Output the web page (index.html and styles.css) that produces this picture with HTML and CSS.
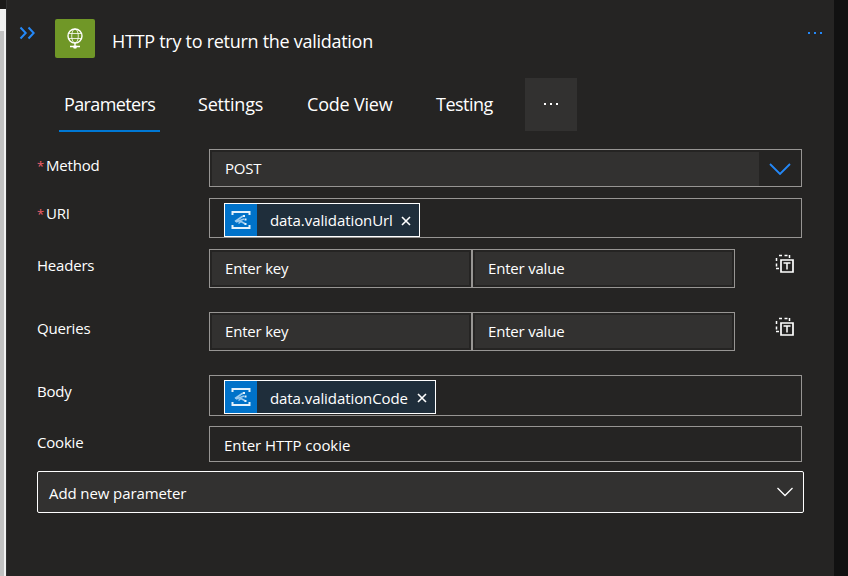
FILE: index.html
```html
<!DOCTYPE html>
<html lang="en">
<head>
    <meta charset="UTF-8">
    <meta name="viewport" content="width=device-width, initial-scale=1.0">
    <title>HTTP try to return the validation</title>
    <link rel="stylesheet" href="styles.css">
</head>
<body>

    <!-- Scrollbar of the designer canvas -->
    <div class="canvas-edge">
        <div class="scroll-button"></div>
        <div class="scroll-thumb"></div>
    </div>

    <div class="panel">
        <!-- Header -->
        <div class="header">
            <svg class="collapse" width="16" height="14" viewBox="0 0 16 14">
                <path d="M1.5 1.5 L6.7 7 L1.5 12.5 M9.5 1.5 L14.7 7 L9.5 12.5"/>
            </svg>
            <div class="logo">
                <svg width="20" height="24" viewBox="0 0 20 24">
                    <circle cx="10" cy="9" r="7" stroke-width="1.4"/>
                    <ellipse cx="10" cy="9" rx="3.3" ry="7" stroke-width="0.8"/>
                    <path d="M3.5 6.5 H16.5 M3.5 11.5 H16.5" stroke-width="0.8"/>
                    <path d="M10 16 V21.5 M5 19.5 H15" stroke-width="1.4"/>
                    <path d="M8.3 20 H11.7" stroke-width="2.6"/>
                </svg>
            </div>
            <div class="title">HTTP try to return the validation</div>
            <svg class="menu" width="17" height="4" viewBox="0 0 17 4">
                <path d="M1 1h2v2h-2z M7 1h2v2h-2z M13 1h2v2h-2z"/>
            </svg>
        </div>

        <!-- Tabs -->
        <div class="tabs">
            <div class="tab tab-parameters active"><span>Parameters</span></div>
            <div class="tab tab-settings"><span>Settings</span></div>
            <div class="tab tab-code"><span>Code View</span></div>
            <div class="tab tab-testing"><span>Testing</span></div>
            <div class="tab-more">
                <svg width="17" height="4" viewBox="0 0 17 4">
                    <path d="M1 1h2v2h-2z M7 1h2v2h-2z M13 1h2v2h-2z"/>
                </svg>
            </div>
        </div>

        <!-- Parameters -->
        <div class="form">
            <div class="row row-method">
                <div class="label"><span class="required">*</span>Method</div>
                <div class="field select">
                    <div class="select-value">POST</div>
                    <svg width="22" height="12" viewBox="0 0 22 12">
                        <path d="M1 1 L11 11 L21 1"/>
                    </svg>
                </div>
            </div>

            <div class="row row-uri">
                <div class="label"><span class="required">*</span>URI</div>
                <div class="field token-field">
                    <div class="token token-url">
                        <div class="token-icon">
                            <svg width="20" height="20" viewBox="0 0 20 20">
                                <path d="M1.5 5 V2 H18.5 V5 M1.5 15 V18 H18.5 V15" stroke="#e4f1fb" stroke-width="2"/>
                                <path d="M4 11.5 L12 6 M5 12 L13 9 M7.5 13.5 L10 11.5 L14.5 14" stroke="#9ccbef" stroke-width="1.6"/>
                                <path d="M12 6 h2 M13.5 9.5 h2 M13.5 14 h2" stroke="#e4f1fb" stroke-width="1.8"/>
                            </svg>
                        </div>
                        <span class="token-text">data.validationUrl</span>
                        <svg class="token-close" width="10" height="10" viewBox="0 0 10 10">
                            <path d="M1 1 L9 9 M9 1 L1 9"/>
                        </svg>
                    </div>
                </div>
            </div>

            <div class="row row-pairs">
                <div class="label">Headers</div>
                <div class="pair">
                    <div class="field"><div class="pair-value">Enter key</div></div>
                    <div class="field"><div class="pair-value">Enter value</div></div>
                </div>
                <svg class="text-mode" width="20" height="20" viewBox="0 0 20 20">
                    <path d="M1.5 4 V7 M1.5 9.5 V12.5 M1 14.5 H4 M4 1.5 H7 M9.5 1.5 H12.5 M14.5 1 V4" stroke-width="1.5"/>
                    <path d="M6 6 H18 V18 H6 Z" stroke-width="1.7"/>
                    <path d="M8.5 9 H15.5 M12 9 V15.5" stroke-width="1.5"/>
                </svg>
            </div>

            <div class="row row-pairs">
                <div class="label">Queries</div>
                <div class="pair">
                    <div class="field"><div class="pair-value">Enter key</div></div>
                    <div class="field"><div class="pair-value">Enter value</div></div>
                </div>
                <svg class="text-mode" width="20" height="20" viewBox="0 0 20 20">
                    <path d="M1.5 4 V7 M1.5 9.5 V12.5 M1 14.5 H4 M4 1.5 H7 M9.5 1.5 H12.5 M14.5 1 V4" stroke-width="1.5"/>
                    <path d="M6 6 H18 V18 H6 Z" stroke-width="1.7"/>
                    <path d="M8.5 9 H15.5 M12 9 V15.5" stroke-width="1.5"/>
                </svg>
            </div>

            <div class="row row-body">
                <div class="label">Body</div>
                <div class="field token-field">
                    <div class="token token-code">
                        <div class="token-icon">
                            <svg width="20" height="20" viewBox="0 0 20 20">
                                <path d="M1.5 5 V2 H18.5 V5 M1.5 15 V18 H18.5 V15" stroke="#e4f1fb" stroke-width="2"/>
                                <path d="M4 11.5 L12 6 M5 12 L13 9 M7.5 13.5 L10 11.5 L14.5 14" stroke="#9ccbef" stroke-width="1.6"/>
                                <path d="M12 6 h2 M13.5 9.5 h2 M13.5 14 h2" stroke="#e4f1fb" stroke-width="1.8"/>
                            </svg>
                        </div>
                        <span class="token-text">data.validationCode</span>
                        <svg class="token-close" width="10" height="10" viewBox="0 0 10 10">
                            <path d="M1 1 L9 9 M9 1 L1 9"/>
                        </svg>
                    </div>
                </div>
            </div>

            <div class="row row-cookie">
                <div class="label">Cookie</div>
                <div class="field cookie-value">Enter HTTP cookie</div>
            </div>

            <div class="add-parameter">
                <span>Add new parameter</span>
                <svg width="18" height="10" viewBox="0 0 18 10">
                    <path d="M1.5 1 L9 8.5 L16.5 1"/>
                </svg>
            </div>
        </div>
    </div>

</body>
</html>
```
FILE: styles.css
```css
/* General styles */
* {
    box-sizing: border-box;
}

body {
    margin: 0;
    height: 576px;
    display: flex;
    overflow: hidden;
    background-color: #111111;
    color: #ffffff;
    font-family: "Open Sans", "Noto Sans", sans-serif;
    font-size: 15px;
    letter-spacing: -0.2px;
    white-space: nowrap;
}

svg {
    display: block;
    flex: none;
    fill: none;
}

/* Canvas scrollbar */
.canvas-edge {
    width: 6px;
    padding-top: 9px;
    display: flex;
    flex-direction: column;
    background-color: #1b1a19;
}

.scroll-button {
    height: 22px;
    background-color: #f1f1f1;
}

.scroll-thumb {
    flex: 1;
    background-color: #c1c1c1;
    border-right: 2px solid #f1f1f1;
}

.panel {
    width: 828px;
    background-color: #252423;
    border-left: 1px solid #303030;
}

/* Header */
.header {
    height: 78px;
    padding: 19px 10px 0 12px;
    display: flex;
    align-items: flex-start;
}

.collapse {
    margin-top: 7px;
    stroke: #2488f8;
    stroke-width: 2;
}

.logo {
    width: 40px;
    height: 39px;
    margin-left: 20px;
    padding: 8px 10px;
    background-color: #709727;
    border-radius: 2px;
}

.logo svg {
    stroke: #ffffff;
}

.title {
    flex: 1;
    margin-left: 17px;
    font-size: 18px;
    line-height: 24px;
    padding-top: 10px;
    letter-spacing: -0.28px;
}

.menu {
    margin-top: 12px;
    fill: #2488f8;
}

/* Tabs */
.tabs {
    height: 53px;
    padding-left: 52px;
    display: flex;
    font-size: 18px;
    line-height: 24px;
}

.tab {
    height: 54px;
    padding: 14px 0 0 5px;
}

.tab-parameters {
    width: 101px;
    margin-right: 33px;
    letter-spacing: -0.62px;
}

.tab-settings {
    width: 109px;
}

.tab-code {
    width: 129px;
}

.tab-testing {
    width: 94px;
    letter-spacing: -0.5px;
}

.active {
    border-bottom: 2px solid #0078d4;
}

.tab-more {
    width: 52px;
    padding: 24px 0 0 18px;
    background-color: #323130;
}

.tab-more svg {
    fill: #ffffff;
}

/* Form */
.form {
    padding: 18px 30px 0 30px;
}

.row {
    display: flex;
    align-items: flex-start;
    line-height: 20px;
}

.label {
    width: 172px;
    padding-top: 6px;
}

.required {
    display: inline-block;
    width: 9px;
    color: #f1606b;
    font-size: 13px;
}

.row-uri .label {
    padding-top: 5px;
}

.field {
    border: 1px solid #979593;
}

.row > .field {
    width: 593px;
}

.row-method {
    height: 49px;
}

.select {
    height: 38px;
    display: flex;
    align-items: center;
    justify-content: space-between;
    padding: 2px 10px 0 2px;
}

.select-value {
    width: 547px;
    height: 34px;
    padding: 6px 13px;
    background-color: #323130;
}

.select svg {
    stroke: #2488f8;
    stroke-width: 1.8;
}

.row-uri {
    height: 51px;
}

.token-field {
    height: 40px;
    padding: 4px 14px 0;
}

.token {
    height: 34px;
    display: flex;
    align-items: center;
    border: 1px solid #ffffff;
    background-color: #1f2e3b;
}

.token-url {
    width: 196px;
}

.token-code {
    width: 212px;
}

.token-icon {
    width: 32px;
    height: 32px;
    padding: 6px;
    background-color: #0072c9;
}

.token-text {
    flex: 1;
    margin-left: 13px;
    letter-spacing: -0.08px;
}

.token-code .token-text {
    padding-top: 2px;
}

.token-close {
    margin: 2px 8px 0 0;
    stroke: #ffffff;
    stroke-width: 1.6;
}

.row-pairs {
    height: 63px;
}

.pair {
    display: flex;
    width: 526px;
}

.pair .field {
    width: 263px;
    height: 39px;
    padding: 2px;
}

.pair-value {
    height: 33px;
    padding: 6px 13px;
    background-color: #323130;
}

.text-mode {
    margin: 5px 0 0 40px;
    stroke: #ffffff;
}

.row-body {
    height: 51px;
}

.row-body .token-field {
    height: 41px;
}

.row-cookie {
    height: 45px;
}

.cookie-value {
    height: 36px;
    padding: 8px 14px;
    letter-spacing: -0.05px;
}

.add-parameter {
    width: 767px;
    height: 42px;
    padding: 0 9px 0 11px;
    display: flex;
    align-items: center;
    justify-content: space-between;
    border: 1px solid #ffffff;
    border-radius: 2px;
    background-color: #323130;
    letter-spacing: -0.1px;
}

.add-parameter span {
    padding-top: 2px;
}

.add-parameter svg {
    margin-bottom: 1px;
    stroke: #ffffff;
    stroke-width: 1.3;
}
```
